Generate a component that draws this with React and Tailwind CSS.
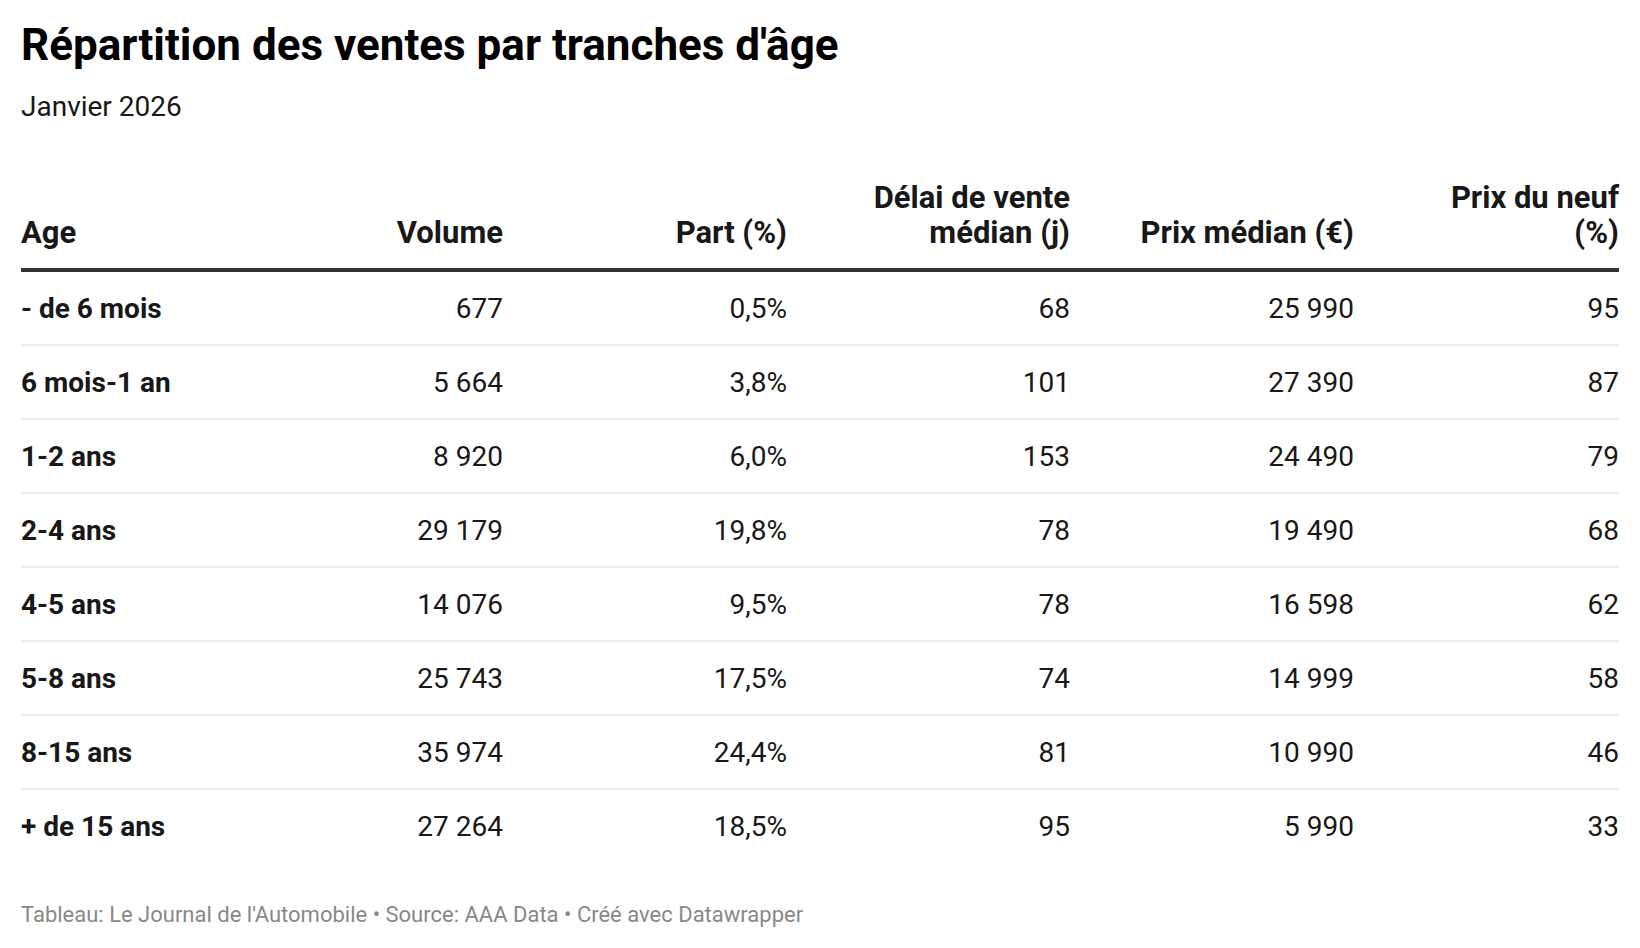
import React from 'react';

const rows = [
  ['- de 6 mois', '677', '0,5%', '68', '25 990', '95'],
  ['6 mois-1 an', '5 664', '3,8%', '101', '27 390', '87'],
  ['1-2 ans', '8 920', '6,0%', '153', '24 490', '79'],
  ['2-4 ans', '29 179', '19,8%', '78', '19 490', '68'],
  ['4-5 ans', '14 076', '9,5%', '78', '16 598', '62'],
  ['5-8 ans', '25 743', '17,5%', '74', '14 999', '58'],
  ['8-15 ans', '35 974', '24,4%', '81', '10 990', '46'],
  ['+ de 15 ans', '27 264', '18,5%', '95', '5 990', '33']
];

const cols = 'grid grid-cols-[198px_284px_284px_283px_284px_265px]';

const App = () => {
  return (
    <div className="min-h-screen bg-white px-[21px] pt-[19px] text-[#181818] font-['Roboto',sans-serif]">
      <h1 className="text-[44px] leading-[53px] font-bold text-black">
        Répartition des ventes par tranches d'âge
      </h1>
      <p className="mt-[17px] text-[28px] leading-[36px] text-[#181818]">Janvier 2026</p>

      <div className="mt-[56px]">
        <div className={`${cols} items-end text-[31px] leading-[34.5px] font-bold pb-[18px] border-b-4 border-[#333333]`}>
          <div>Age</div>
          <div className="text-right">Volume</div>
          <div className="text-right">Part (%)</div>
          <div className="text-right">
            Délai de vente
            <br />
            médian (j)
          </div>
          <div className="text-right">Prix médian (€)</div>
          <div className="text-right">
            Prix du neuf
            <br />
            (%)
          </div>
        </div>

        {rows.map((r, i) => (
          <div
            key={r[0]}
            className={`${cols} text-[28px] leading-[35px] pt-[19px] pb-[18px] ${
              i < rows.length - 1 ? 'border-b-2 border-[#ececec]' : ''
            }`}
          >
            <div className="font-bold">{r[0]}</div>
            {r.slice(1).map((v, j) => (
              <div key={j} className="text-right">
                {v}
              </div>
            ))}
          </div>
        ))}
      </div>

      <p className="mt-[39px] text-[22px] leading-[28px] text-[#888888]">
        Tableau: Le Journal de l'Automobile • Source: AAA Data • Créé avec Datawrapper
      </p>
    </div>
  );
};

export default App;
